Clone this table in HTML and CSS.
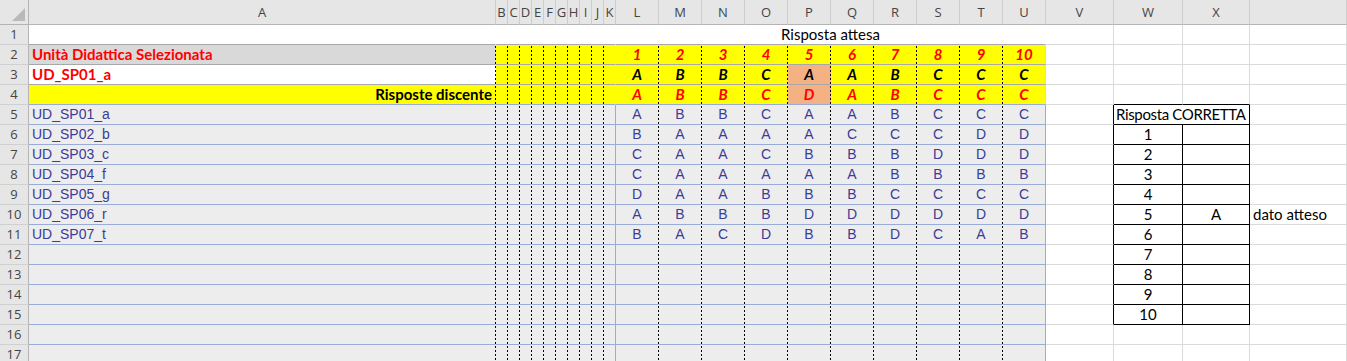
FILE: index.html
```html
<!DOCTYPE html>
<html lang="it">
<head>
<meta charset="utf-8">
<title>Foglio risposte</title>
<link rel="stylesheet" href="styles.css">
</head>
<body>
<div class="sheet">
  <!-- column headers -->
  <div class="c hd corner"></div>
  <div class="c hd">A</div>
  <div class="c hd">B</div><div class="c hd">C</div><div class="c hd">D</div><div class="c hd">E</div><div class="c hd">F</div><div class="c hd">G</div><div class="c hd">H</div><div class="c hd">I</div><div class="c hd">J</div><div class="c hd">K</div>
  <div class="c hd">L</div><div class="c hd">M</div><div class="c hd">N</div><div class="c hd">O</div><div class="c hd">P</div><div class="c hd">Q</div><div class="c hd">R</div><div class="c hd">S</div><div class="c hd">T</div><div class="c hd">U</div>
  <div class="c hd">V</div><div class="c hd">W</div><div class="c hd">X</div><div class="c hd"></div>

  <!-- row 1 -->
  <div class="c rh">1</div>
  <div class="c wr hb"></div>
  <div class="c wr hb sp10"></div>
  <div class="c wr hb sp10 ctr">Risposta attesa</div>
  <div class="c"></div><div class="c"></div><div class="c"></div><div class="c"></div>

  <!-- row 2 -->
  <div class="c rh">2</div>
  <div class="c dg red bold d hb">Unità Didattica Selezionata</div>
  <div class="c y d hb"></div><div class="c y d hb"></div><div class="c y d hb"></div><div class="c y d hb"></div><div class="c y d hb"></div><div class="c y d hb"></div><div class="c y d hb"></div><div class="c y d hb"></div><div class="c y d hb"></div><div class="c y n hb"></div>
  <div class="c y d hb bi red">1</div><div class="c y d hb bi red">2</div><div class="c y d hb bi red">3</div><div class="c y d hb bi red">4</div><div class="c y d hb bi red">5</div><div class="c y d hb bi red">6</div><div class="c y d hb bi red">7</div><div class="c y d hb bi red">8</div><div class="c y d hb bi red">9</div><div class="c y hb bi red">10</div>
  <div class="c"></div><div class="c"></div><div class="c"></div><div class="c"></div>

  <!-- row 3 -->
  <div class="c rh">3</div>
  <div class="c red bold d hb">UD_SP01_a</div>
  <div class="c y d hb"></div><div class="c y d hb"></div><div class="c y d hb"></div><div class="c y d hb"></div><div class="c y d hb"></div><div class="c y d hb"></div><div class="c y d hb"></div><div class="c y d hb"></div><div class="c y d hb"></div><div class="c y n hb"></div>
  <div class="c y d hb bi">A</div><div class="c y d hb bi">B</div><div class="c y d hb bi">B</div><div class="c y d hb bi">C</div><div class="c s d hb bi">A</div><div class="c y d hb bi">A</div><div class="c y d hb bi">B</div><div class="c y d hb bi">C</div><div class="c y d hb bi">C</div><div class="c y hb bi">C</div>
  <div class="c"></div><div class="c"></div><div class="c"></div><div class="c"></div>

  <!-- row 4 -->
  <div class="c rh">4</div>
  <div class="c y bold right d bb">Risposte discente</div>
  <div class="c y d bb"></div><div class="c y d bb"></div><div class="c y d bb"></div><div class="c y d bb"></div><div class="c y d bb"></div><div class="c y d bb"></div><div class="c y d bb"></div><div class="c y d bb"></div><div class="c y d bb"></div><div class="c y n bb"></div>
  <div class="c y d bb bi red">A</div><div class="c y d bb bi red">B</div><div class="c y d bb bi red">B</div><div class="c y d bb bi red">C</div><div class="c s d bb bi red">D</div><div class="c y d bb bi red">A</div><div class="c y d bb bi red">B</div><div class="c y d bb bi red">C</div><div class="c y d bb bi red">C</div><div class="c y bb bi red">C</div>
  <div class="c"></div><div class="c xb"></div><div class="c xb"></div><div class="c"></div>

  <!-- row 5 -->
  <div class="c rh">5</div>
  <div class="c g ar d bb">UD_SP01_a</div>
  <div class="c g d bb"></div><div class="c g d bb"></div><div class="c g d bb"></div><div class="c g d bb"></div><div class="c g d bb"></div><div class="c g d bb"></div><div class="c g d bb"></div><div class="c g d bb"></div><div class="c g d bb"></div><div class="c g bl bb"></div>
  <div class="c g d bb ar ctr">A</div><div class="c g d bb ar ctr">B</div><div class="c g d bb ar ctr">B</div><div class="c g d bb ar ctr">C</div><div class="c g d bb ar ctr">A</div><div class="c g d bb ar ctr">A</div><div class="c g d bb ar ctr">B</div><div class="c g d bb ar ctr">C</div><div class="c g d bb ar ctr">C</div><div class="c g bl bb ar ctr">C</div>
  <div class="c xr"></div><div class="c xr xb sp2 tight">Risposta CORRETTA</div><div class="c"></div>

  <!-- row 6 -->
  <div class="c rh">6</div>
  <div class="c g ar d bb">UD_SP02_b</div>
  <div class="c g d bb"></div><div class="c g d bb"></div><div class="c g d bb"></div><div class="c g d bb"></div><div class="c g d bb"></div><div class="c g d bb"></div><div class="c g d bb"></div><div class="c g d bb"></div><div class="c g d bb"></div><div class="c g bl bb"></div>
  <div class="c g d bb ar ctr">B</div><div class="c g d bb ar ctr">A</div><div class="c g d bb ar ctr">A</div><div class="c g d bb ar ctr">A</div><div class="c g d bb ar ctr">A</div><div class="c g d bb ar ctr">C</div><div class="c g d bb ar ctr">C</div><div class="c g d bb ar ctr">C</div><div class="c g d bb ar ctr">D</div><div class="c g bl bb ar ctr">D</div>
  <div class="c xr"></div><div class="c xr xb ctr">1</div><div class="c xr xb"></div><div class="c"></div>

  <!-- row 7 -->
  <div class="c rh">7</div>
  <div class="c g ar d bb">UD_SP03_c</div>
  <div class="c g d bb"></div><div class="c g d bb"></div><div class="c g d bb"></div><div class="c g d bb"></div><div class="c g d bb"></div><div class="c g d bb"></div><div class="c g d bb"></div><div class="c g d bb"></div><div class="c g d bb"></div><div class="c g bl bb"></div>
  <div class="c g d bb ar ctr">C</div><div class="c g d bb ar ctr">A</div><div class="c g d bb ar ctr">A</div><div class="c g d bb ar ctr">C</div><div class="c g d bb ar ctr">B</div><div class="c g d bb ar ctr">B</div><div class="c g d bb ar ctr">B</div><div class="c g d bb ar ctr">D</div><div class="c g d bb ar ctr">D</div><div class="c g bl bb ar ctr">D</div>
  <div class="c xr"></div><div class="c xr xb ctr">2</div><div class="c xr xb"></div><div class="c"></div>

  <!-- row 8 -->
  <div class="c rh">8</div>
  <div class="c g ar d bb">UD_SP04_f</div>
  <div class="c g d bb"></div><div class="c g d bb"></div><div class="c g d bb"></div><div class="c g d bb"></div><div class="c g d bb"></div><div class="c g d bb"></div><div class="c g d bb"></div><div class="c g d bb"></div><div class="c g d bb"></div><div class="c g bl bb"></div>
  <div class="c g d bb ar ctr">C</div><div class="c g d bb ar ctr">A</div><div class="c g d bb ar ctr">A</div><div class="c g d bb ar ctr">A</div><div class="c g d bb ar ctr">A</div><div class="c g d bb ar ctr">A</div><div class="c g d bb ar ctr">B</div><div class="c g d bb ar ctr">B</div><div class="c g d bb ar ctr">B</div><div class="c g bl bb ar ctr">B</div>
  <div class="c xr"></div><div class="c xr xb ctr">3</div><div class="c xr xb"></div><div class="c"></div>

  <!-- row 9 -->
  <div class="c rh">9</div>
  <div class="c g ar d bb">UD_SP05_g</div>
  <div class="c g d bb"></div><div class="c g d bb"></div><div class="c g d bb"></div><div class="c g d bb"></div><div class="c g d bb"></div><div class="c g d bb"></div><div class="c g d bb"></div><div class="c g d bb"></div><div class="c g d bb"></div><div class="c g bl bb"></div>
  <div class="c g d bb ar ctr">D</div><div class="c g d bb ar ctr">A</div><div class="c g d bb ar ctr">A</div><div class="c g d bb ar ctr">B</div><div class="c g d bb ar ctr">B</div><div class="c g d bb ar ctr">B</div><div class="c g d bb ar ctr">C</div><div class="c g d bb ar ctr">C</div><div class="c g d bb ar ctr">C</div><div class="c g bl bb ar ctr">C</div>
  <div class="c xr"></div><div class="c xr xb ctr">4</div><div class="c xr xb"></div><div class="c"></div>

  <!-- row 10 -->
  <div class="c rh">10</div>
  <div class="c g ar d bb">UD_SP06_r</div>
  <div class="c g d bb"></div><div class="c g d bb"></div><div class="c g d bb"></div><div class="c g d bb"></div><div class="c g d bb"></div><div class="c g d bb"></div><div class="c g d bb"></div><div class="c g d bb"></div><div class="c g d bb"></div><div class="c g bl bb"></div>
  <div class="c g d bb ar ctr">A</div><div class="c g d bb ar ctr">B</div><div class="c g d bb ar ctr">B</div><div class="c g d bb ar ctr">B</div><div class="c g d bb ar ctr">D</div><div class="c g d bb ar ctr">D</div><div class="c g d bb ar ctr">D</div><div class="c g d bb ar ctr">D</div><div class="c g d bb ar ctr">D</div><div class="c g bl bb ar ctr">D</div>
  <div class="c xr"></div><div class="c xr xb ctr">5</div><div class="c xr xb ctr">A</div><div class="c">dato atteso</div>

  <!-- row 11 -->
  <div class="c rh">11</div>
  <div class="c g ar d bb">UD_SP07_t</div>
  <div class="c g d bb"></div><div class="c g d bb"></div><div class="c g d bb"></div><div class="c g d bb"></div><div class="c g d bb"></div><div class="c g d bb"></div><div class="c g d bb"></div><div class="c g d bb"></div><div class="c g d bb"></div><div class="c g bl bb"></div>
  <div class="c g d bb ar ctr">B</div><div class="c g d bb ar ctr">A</div><div class="c g d bb ar ctr">C</div><div class="c g d bb ar ctr">D</div><div class="c g d bb ar ctr">B</div><div class="c g d bb ar ctr">B</div><div class="c g d bb ar ctr">D</div><div class="c g d bb ar ctr">C</div><div class="c g d bb ar ctr">A</div><div class="c g bl bb ar ctr">B</div>
  <div class="c xr"></div><div class="c xr xb ctr">6</div><div class="c xr xb"></div><div class="c"></div>

  <!-- row 12 -->
  <div class="c rh">12</div>
  <div class="c g d bb"></div>
  <div class="c g d bb"></div><div class="c g d bb"></div><div class="c g d bb"></div><div class="c g d bb"></div><div class="c g d bb"></div><div class="c g d bb"></div><div class="c g d bb"></div><div class="c g d bb"></div><div class="c g d bb"></div><div class="c g bl bb"></div>
  <div class="c g d bb"></div><div class="c g d bb"></div><div class="c g d bb"></div><div class="c g d bb"></div><div class="c g d bb"></div><div class="c g d bb"></div><div class="c g d bb"></div><div class="c g d bb"></div><div class="c g d bb"></div><div class="c g bl bb"></div>
  <div class="c xr"></div><div class="c xr xb ctr">7</div><div class="c xr xb"></div><div class="c"></div>

  <!-- row 13 -->
  <div class="c rh">13</div>
  <div class="c g d bb"></div>
  <div class="c g d bb"></div><div class="c g d bb"></div><div class="c g d bb"></div><div class="c g d bb"></div><div class="c g d bb"></div><div class="c g d bb"></div><div class="c g d bb"></div><div class="c g d bb"></div><div class="c g d bb"></div><div class="c g bl bb"></div>
  <div class="c g d bb"></div><div class="c g d bb"></div><div class="c g d bb"></div><div class="c g d bb"></div><div class="c g d bb"></div><div class="c g d bb"></div><div class="c g d bb"></div><div class="c g d bb"></div><div class="c g d bb"></div><div class="c g bl bb"></div>
  <div class="c xr"></div><div class="c xr xb ctr">8</div><div class="c xr xb"></div><div class="c"></div>

  <!-- row 14 -->
  <div class="c rh">14</div>
  <div class="c g d bb"></div>
  <div class="c g d bb"></div><div class="c g d bb"></div><div class="c g d bb"></div><div class="c g d bb"></div><div class="c g d bb"></div><div class="c g d bb"></div><div class="c g d bb"></div><div class="c g d bb"></div><div class="c g d bb"></div><div class="c g bl bb"></div>
  <div class="c g d bb"></div><div class="c g d bb"></div><div class="c g d bb"></div><div class="c g d bb"></div><div class="c g d bb"></div><div class="c g d bb"></div><div class="c g d bb"></div><div class="c g d bb"></div><div class="c g d bb"></div><div class="c g bl bb"></div>
  <div class="c xr"></div><div class="c xr xb ctr">9</div><div class="c xr xb"></div><div class="c"></div>

  <!-- row 15 -->
  <div class="c rh">15</div>
  <div class="c g d bb"></div>
  <div class="c g d bb"></div><div class="c g d bb"></div><div class="c g d bb"></div><div class="c g d bb"></div><div class="c g d bb"></div><div class="c g d bb"></div><div class="c g d bb"></div><div class="c g d bb"></div><div class="c g d bb"></div><div class="c g bl bb"></div>
  <div class="c g d bb"></div><div class="c g d bb"></div><div class="c g d bb"></div><div class="c g d bb"></div><div class="c g d bb"></div><div class="c g d bb"></div><div class="c g d bb"></div><div class="c g d bb"></div><div class="c g d bb"></div><div class="c g bl bb"></div>
  <div class="c xr"></div><div class="c xr xb ctr">10</div><div class="c xr xb"></div><div class="c"></div>

  <!-- row 16 -->
  <div class="c rh">16</div>
  <div class="c g d bb"></div>
  <div class="c g d bb"></div><div class="c g d bb"></div><div class="c g d bb"></div><div class="c g d bb"></div><div class="c g d bb"></div><div class="c g d bb"></div><div class="c g d bb"></div><div class="c g d bb"></div><div class="c g d bb"></div><div class="c g bl bb"></div>
  <div class="c g d bb"></div><div class="c g d bb"></div><div class="c g d bb"></div><div class="c g d bb"></div><div class="c g d bb"></div><div class="c g d bb"></div><div class="c g d bb"></div><div class="c g d bb"></div><div class="c g d bb"></div><div class="c g bl bb"></div>
  <div class="c"></div><div class="c"></div><div class="c"></div><div class="c"></div>

  <!-- row 17 -->
  <div class="c rh">17</div>
  <div class="c g d bb"></div>
  <div class="c g d bb"></div><div class="c g d bb"></div><div class="c g d bb"></div><div class="c g d bb"></div><div class="c g d bb"></div><div class="c g d bb"></div><div class="c g d bb"></div><div class="c g d bb"></div><div class="c g d bb"></div><div class="c g bl bb"></div>
  <div class="c g d bb"></div><div class="c g d bb"></div><div class="c g d bb"></div><div class="c g d bb"></div><div class="c g d bb"></div><div class="c g d bb"></div><div class="c g d bb"></div><div class="c g d bb"></div><div class="c g d bb"></div><div class="c g bl bb"></div>
  <div class="c"></div><div class="c"></div><div class="c"></div><div class="c"></div>
</div>
</body>
</html>
```

FILE: styles.css
```css
html, body {
  margin: 0;
  padding: 0;
  background: #ffffff;
  overflow: hidden;
}

.sheet {
  display: grid;
  grid-template-columns: 29px 467px repeat(10, 12px) repeat(10, 43px) 68px 69px 67px 1fr;
  grid-template-rows: 25px;
  grid-auto-rows: 20px;
  width: 1347px;
}

.c {
  box-sizing: border-box;
  border-right: 1px solid #dadada;
  border-bottom: 1px solid #dadada;
  padding: 0 3px;
  font-family: Lato, "Liberation Sans", sans-serif;
  font-size: 15px;
  line-height: 19px;
  color: #000;
  white-space: nowrap;
  overflow: hidden;
}

/* headers */
.hd {
  background: #e6e6e6;
  border-right-color: #cdcdcd;
  border-bottom-color: #b4b4b4;
  text-align: center;
  padding: 0;
  font-family: "Open Sans", "Noto Sans", sans-serif;
  font-size: 13px;
  line-height: 24px;
  color: #444;
}

.corner {
  position: relative;
  border-right-color: #b4b4b4;
}

.corner::after {
  content: "";
  position: absolute;
  right: 3px;
  bottom: 3px;
  width: 0;
  height: 0;
  border-left: 13px solid transparent;
  border-bottom: 13px solid #b9b9b9;
}

.rh {
  background: #e6e6e6;
  border-right-color: #b4b4b4;
  border-bottom-color: #d0d0d0;
  text-align: center;
  padding: 0;
  font-family: "Open Sans", "Noto Sans", sans-serif;
  font-size: 13px;
  line-height: 19px;
  color: #444;
}

/* spans */
.sp10 { grid-column: span 10; }
.sp2 { grid-column: span 2; }

/* fills */
.y { background-color: #ffff00; }
.s { background-color: #f4b183; }
.g { background-color: #ededed; }
.dg { background-color: #d9d9d9; }
.wr { border-right-color: #ffffff; }

/* borders */
.d {
  border-right-color: transparent;
  background-image: linear-gradient(to bottom, #000000 50%, transparent 50%);
  background-size: 1px 4px;
  background-repeat: repeat-y;
  background-position: right 0 top 1px;
  background-origin: border-box;
}
.n { border-right-color: transparent; }
.bl { border-right: 1px solid #98abd9; }
.hb { border-bottom-color: #a8a8a8; }
.bb { border-bottom-color: #98abd9; }
.xb { border-bottom: 1px solid #000000; }
.xr { border-right: 1px solid #000000; }

/* text */
.ctr { text-align: center; }
.right { text-align: right; }
.bold { font-weight: 700; }
.red { color: #ff0000; }
.tight {
  padding: 0 0 0 2px;
  letter-spacing: -0.35px;
}
.bi {
  font-weight: 700;
  font-style: italic;
  text-align: center;
}
.ar {
  font-family: "Liberation Sans", Arial, sans-serif;
  font-size: 14px;
  color: #3b3b98;
}
```
